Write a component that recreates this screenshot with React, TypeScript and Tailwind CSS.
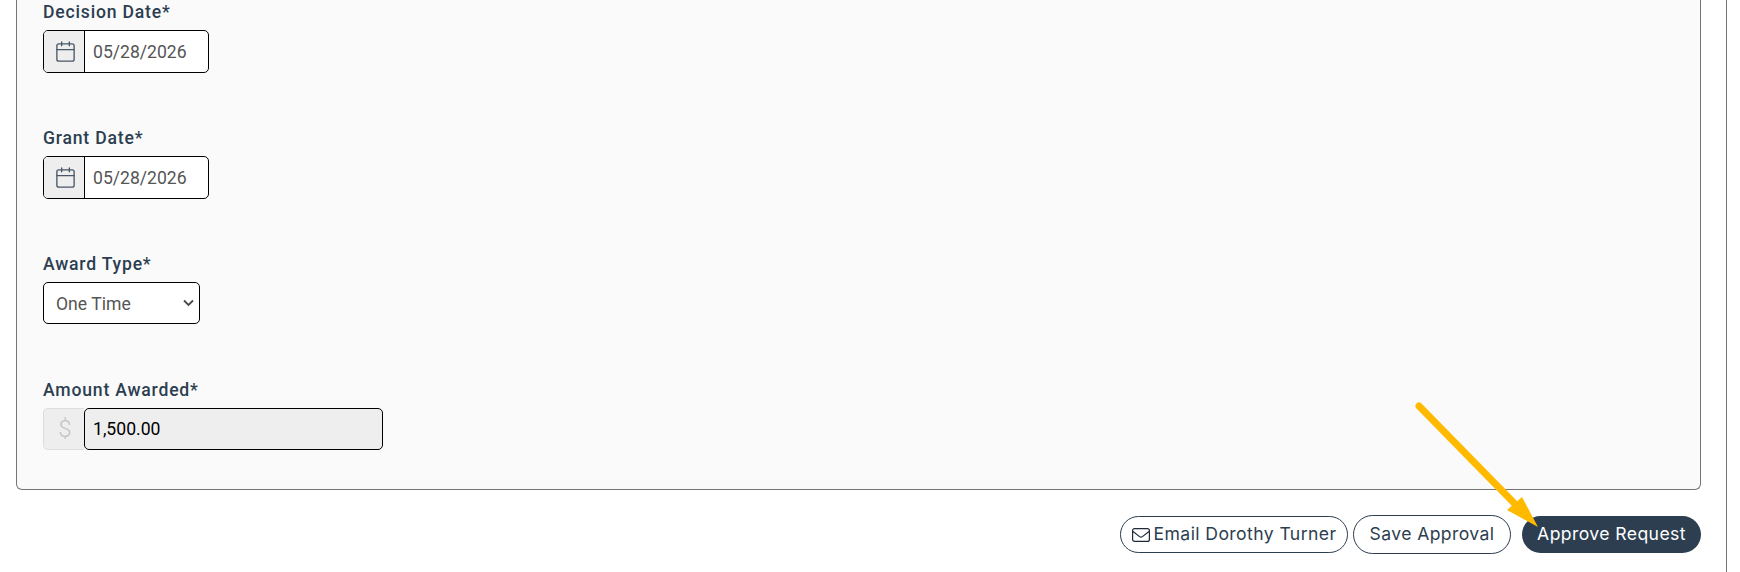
import { Calendar } from "lucide-react";

function Label({ children }: { children: string }) {
  return <label className="mb-[6px] block text-[17.6px] leading-[24px] font-medium tracking-[0.8px] text-[#2c3e50]">{children}</label>;
}

function DateField({ label, value }: { label: string; value: string }) {
  return (
    <div className="mb-[53px]">
      <Label>{label}</Label>
      <div className="flex h-[43px] w-[166px] overflow-hidden rounded-[5px] border border-black bg-white">
        <span className="flex w-[41px] shrink-0 items-center justify-center border-r border-black bg-[#eeeeee] pl-[2px] text-[#4a5768]">
          <Calendar size={23} strokeWidth={1.4} />
        </span>
        <span className="flex items-center pt-[1px] pl-[8px] text-[17.6px] text-[#555555]">{value}</span>
      </div>
    </div>
  );
}

export default function App() {
  return (
    <div className="relative h-[572px] w-[1740px] overflow-hidden bg-white font-['Roboto',sans-serif]">
      <div className="h-full w-[1727px] border-r border-[#757575] pr-[25px] pl-[16px]">
        <div className="h-[490px] rounded-b-[6px] border-x border-b border-[#757575] bg-[#fafafa] pl-[26px]">
          <DateField label="Decision Date*" value="05/28/2026" />
          <DateField label="Grant Date*" value="05/28/2026" />

          <div className="mb-[54px]">
            <Label>Award Type*</Label>
            <div className="relative w-[157px]">
              <select className="h-[42px] w-full appearance-none rounded-[5px] border border-black bg-white pt-[3px] pl-[12px] text-[17.6px] text-[#555555]" defaultValue="One Time">
                <option>One Time</option>
                <option>Recurring</option>
              </select>
              {/* chevron sits over the select */}
              <svg className="pointer-events-none absolute top-[17px] right-[6px]" width="11" height="8" viewBox="0 0 11 8" fill="none">
                <path d="M1 1.5 L5.5 6 L10 1.5" stroke="#4a4a4a" strokeWidth="1.8" />
              </svg>
            </div>
          </div>

          <div>
            <Label>Amount Awarded*</Label>
            <div className="flex h-[42px] w-[340px]">
              <span className="flex w-[41px] shrink-0 items-center justify-center rounded-l-[5px] border-y border-l border-[#dddddd] bg-[#eeeeee] pl-[2px] text-[24px] font-light text-[#c4c4c4]">$</span>
              <span className="flex flex-1 items-center rounded-[5px] border border-black bg-[#eeeeee] pl-[8px] text-[17.6px] text-black">1,500.00</span>
            </div>
          </div>
        </div>

        <div className="mt-[25px] flex items-center justify-end font-['Inter',sans-serif] text-[17.6px] tracking-[0.4px]">
          <button className="flex h-[37px] w-[228px] items-center justify-center gap-[4px] rounded-full border border-[#2c3e50] bg-white text-[#2c3e50]">
            <svg width="18" height="14" viewBox="0 0 18 14" fill="none" stroke="#1f2937" strokeWidth="1.2">
              <rect x="0.6" y="0.6" width="16.8" height="12.8" rx="2" />
              <path d="M1 3.5 L7.6 8.6 a2.2 2.2 0 0 0 2.8 0 L17 3.5" />
            </svg>
            Email Dorothy Turner
          </button>
          <button className="ml-[5px] h-[39px] w-[158px] rounded-full border border-[#2c3e50] bg-white text-[#2c3e50]">Save Approval</button>
          <button className="ml-[11px] h-[37px] w-[179px] rounded-full bg-[#2c3e50] text-white">Approve Request</button>
        </div>
      </div>

      <svg className="absolute top-0 left-0" width="1740" height="572" fill="none">
        <path d="M1419 406 L1515 504" stroke="#ffba00" strokeWidth="7" strokeLinecap="round" />
        <path d="M1538 527 L1507 510 L1522 497 Z" fill="#ffba00" />
      </svg>
    </div>
  );
}
